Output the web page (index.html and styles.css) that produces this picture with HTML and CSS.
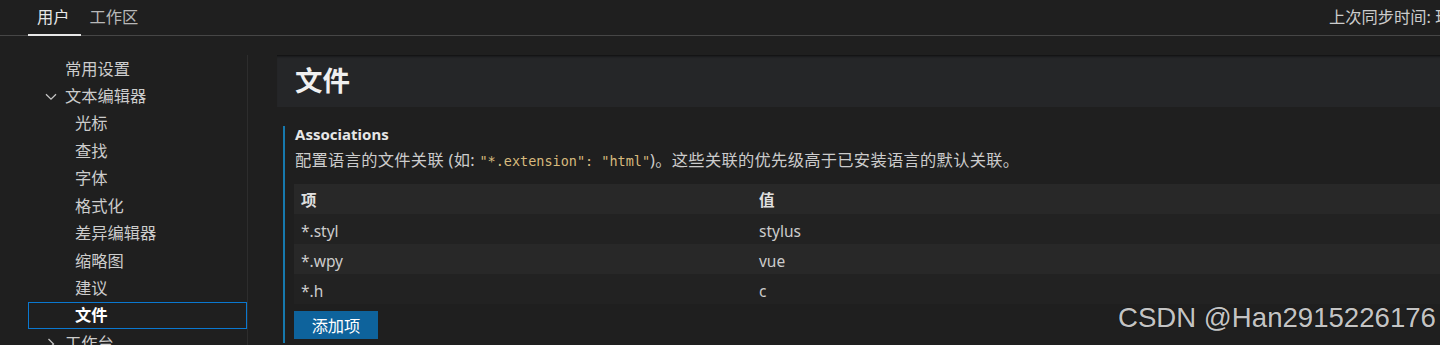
FILE: index.html
```html
<!DOCTYPE html>
<html lang="zh-CN">
<head>
<meta charset="utf-8">
<title>Settings</title>
<link rel="stylesheet" href="styles.css">
</head>
<body>
<div class="app">
  <div class="tabbar">
    <div class="tab active">用户</div>
    <div class="tab">工作区</div>
    <div class="sync">上次同步时间: 现在</div>
  </div>
  <div class="main">
    <nav class="toc">
      <div class="toc-item l1">常用设置</div>
      <div class="toc-item l1 chev"><svg class="chev-icon" width="12" height="8" viewBox="0 0 12 8"><path d="M1 1.2 L6 6.2 L11 1.2" fill="none" stroke="#c5c5c5" stroke-width="1.3"/></svg>文本编辑器</div>
      <div class="toc-item l2">光标</div>
      <div class="toc-item l2">查找</div>
      <div class="toc-item l2">字体</div>
      <div class="toc-item l2">格式化</div>
      <div class="toc-item l2">差异编辑器</div>
      <div class="toc-item l2">缩略图</div>
      <div class="toc-item l2">建议</div>
      <div class="toc-item l2 selected">文件</div>
      <div class="toc-item l1 chev"><svg class="chev-icon" width="12" height="12" viewBox="0 0 12 12"><path d="M3.5 1 L8.5 6 L3.5 11" fill="none" stroke="#c5c5c5" stroke-width="1.3"/></svg>工作台</div>
    </nav>
    <section class="content">
      <div class="cat-header"><h1 class="cat-title">文件</h1></div>
      <div class="setting">
        <div class="setting-title">Associations</div>
        <div class="setting-desc">配置语言的文件关联 (如: <code class="code">"*.extension": "html"</code>)。这些关联的优先级高于已安装语言的默认关联。</div>
        <div class="table">
          <div class="row head"><div class="cell">项</div><div class="cell">值</div></div>
          <div class="row odd"><div class="cell">*.styl</div><div class="cell">stylus</div></div>
          <div class="row even"><div class="cell">*.wpy</div><div class="cell">vue</div></div>
          <div class="row odd"><div class="cell">*.h</div><div class="cell">c</div></div>
        </div>
        <button class="add-btn">添加项</button>
      </div>
    </section>
  </div>
</div>
<div class="watermark">CSDN @Han2915226176</div>
</body>
</html>
```

FILE: styles.css
```css
html, body {
  margin: 0;
  padding: 0;
}
body {
  width: 1440px;
  height: 345px;
  overflow: hidden;
  background: #1f1f1f;
  color: #cccccc;
  font-family: "Noto Sans", "Noto Sans CJK SC", sans-serif;
  font-size: 16.25px;
  position: relative;
}
.app {
  width: 1600px;
}
.tabbar {
  display: flex;
  align-items: flex-start;
  height: 36px;
  box-sizing: border-box;
  border-bottom: 1px solid #464646;
  padding-left: 28px;
}
.tab {
  height: 36px;
  box-sizing: border-box;
  line-height: 34px;
  padding: 0 11px 0 9px;
  color: #b8b8b8;
  border-bottom: 2px solid transparent;
}
.tab.active {
  color: #e7e7e7;
  border-bottom-color: #e7e7e7;
}
.sync {
  margin-left: auto;
  width: 271px;
  flex-shrink: 0;
  line-height: 34px;
  white-space: nowrap;
  color: #cccccc;
}
.main {
  display: flex;
  margin-top: 19px;
  height: 290px;
}
.toc {
  width: 248px;
  flex-shrink: 0;
  box-sizing: border-box;
  padding-left: 28px;
  border-right: 1px solid #2d2d2d;
}
.toc-item {
  height: 27.45px;
  line-height: 27.45px;
  white-space: nowrap;
  color: #cccccc;
  display: flex;
  align-items: center;
  padding-top: 1px;
  box-sizing: border-box;
}
.toc-item.l1 { padding-left: 37px; }
.toc-item.l1.chev { padding-left: 17px; }
.toc-item.l2 { padding-left: 47px; }
.chev-icon {
  width: 12px;
  margin-right: 8px;
  flex-shrink: 0;
}
.toc-item.selected {
  outline: 1px solid #0a78d0;
  outline-offset: -1px;
  color: #ffffff;
  font-weight: 700;
}
.content {
  flex: 1;
  margin-left: 29px;
}
.cat-header {
  height: 52px;
  background: #252628;
  padding-left: 18px;
  box-shadow: inset 0 3px 3px -2px rgba(0, 0, 0, 0.7);
}
.cat-title {
  margin: 0;
  font-size: 27.5px;
  font-weight: 700;
  line-height: 52px;
  color: #f0f0f0;
}
.setting {
  margin-top: 19px;
  margin-left: 6px;
  border-left: 2px solid #1779ad;
  padding-left: 10px;
  padding-bottom: 4px;
}
.setting-title {
  font-weight: 700;
  font-size: 15px;
  line-height: 17px;
  color: #e7e7e7;
}
.setting-desc {
  margin-top: 6px;
  line-height: 22px;
  white-space: nowrap;
  color: #cccccc;
  letter-spacing: 0.3px;
}
.code {
  font-family: "DejaVu Sans Mono", "Liberation Mono", monospace;
  font-size: 13.5px;
  letter-spacing: 0;
  color: #d7ba7d;
}
.table {
  margin-top: 12px;
  margin-left: -1px;
}
.row {
  display: grid;
  grid-template-columns: 458px 1fr;
  height: 30px;
  align-items: center;
}
.row.head {
  background: #282828;
  font-weight: 700;
  color: #e0e0e0;
}
.row.odd { background: #222222; }
.row.even { background: #282828; }
.row.odd .cell,
.row.even .cell {
  padding-top: 4px;
}
.cell {
  padding-left: 7px;
  font-size: 15.5px;
}
.add-btn {
  display: block;
  margin-top: 7px;
  margin-left: -1px;
  width: 84px;
  height: 28px;
  border: none;
  padding: 0;
  background: #0e639c;
  color: #ffffff;
  font-family: "Noto Sans", "Noto Sans CJK SC", sans-serif;
  font-size: 16.25px;
}
.watermark {
  position: absolute;
  left: 1118px;
  top: 300px;
  font-family: "Liberation Sans", Arial, sans-serif;
  font-size: 27.6px;
  line-height: 36px;
  color: rgba(222, 222, 222, 0.9);
  white-space: nowrap;
  text-shadow: 0 0 1px rgba(0, 0, 0, 0.6);
}
```
